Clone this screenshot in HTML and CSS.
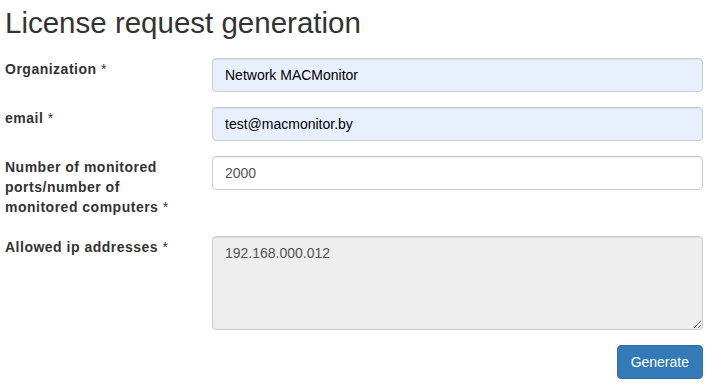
FILE: index.html
```html
<!DOCTYPE html>
<html lang="en">
<head>
    <meta charset="UTF-8">
    <meta name="viewport" content="width=device-width, initial-scale=1.0">
    <title>License request generation</title>
    <link rel="stylesheet" href="styles.css">
</head>
<body>
    <div class="container">
        <h1 class="page-title">License request generation</h1>
        <form class="license-form" onsubmit="return false;">
            <div class="form-group">
                <label for="organization">Organization <span class="required">*</span></label>
                <input type="text" id="organization" class="form-control autofilled" value="Network MACMonitor">
            </div>
            <div class="form-group">
                <label for="email">email <span class="required">*</span></label>
                <input type="text" id="email" class="form-control autofilled" value="test@macmonitor.by">
            </div>
            <div class="form-group">
                <label for="ports">Number of monitored ports/number of monitored computers <span class="required">*</span></label>
                <input type="text" id="ports" class="form-control" value="2000">
            </div>
            <div class="form-group">
                <label for="ips">Allowed ip addresses <span class="required">*</span></label>
                <textarea id="ips" class="form-control" rows="4" readonly>192.168.000.012</textarea>
            </div>
            <div class="form-actions">
                <button type="submit" class="button">Generate</button>
            </div>
        </form>
    </div>
</body>
</html>
```

FILE: styles.css
```css
body {
    font-family: "Liberation Sans", Arial, sans-serif;
    font-size: 14px;
    line-height: 20px;
    color: #333;
    background-color: #fff;
    margin: 0;
    padding: 0;
}

.container {
    padding: 0 5px;
}

.page-title {
    font-size: 29.5px;
    font-weight: 500;
    line-height: 33px;
    margin: 6px 0 19px;
}

.form-group {
    display: grid;
    grid-template-columns: 192px 1fr;
    column-gap: 15px;
    align-items: start;
    margin-bottom: 15px;
}

.form-group label {
    font-weight: bold;
    letter-spacing: 0.5px;
    padding: 1px 0 4px;
}

.required {
    font-weight: normal;
}

.form-control {
    display: block;
    width: 100%;
    height: 34px;
    padding: 6px 12px;
    box-sizing: border-box;
    font-family: inherit;
    font-size: 14px;
    line-height: 20px;
    color: #555;
    background-color: #fff;
    border: 1px solid #ccc;
    border-radius: 4px;
    box-shadow: inset 0 1px 1px rgba(0, 0, 0, 0.075);
    margin: 0;
}

.autofilled {
    background-color: #e8f0fe;
    color: #000;
}

textarea.form-control {
    height: 94px;
    resize: vertical;
    background-color: #eee;
}

.form-actions {
    display: flex;
    justify-content: flex-end;
}

.button {
    font-family: inherit;
    font-size: 14px;
    line-height: 20px;
    color: #fff;
    background-color: #337ab7;
    border: 1px solid #2e6da4;
    border-radius: 4px;
    padding: 6px 13px;
    cursor: pointer;
}

.button:hover {
    background-color: #286090;
}
```
